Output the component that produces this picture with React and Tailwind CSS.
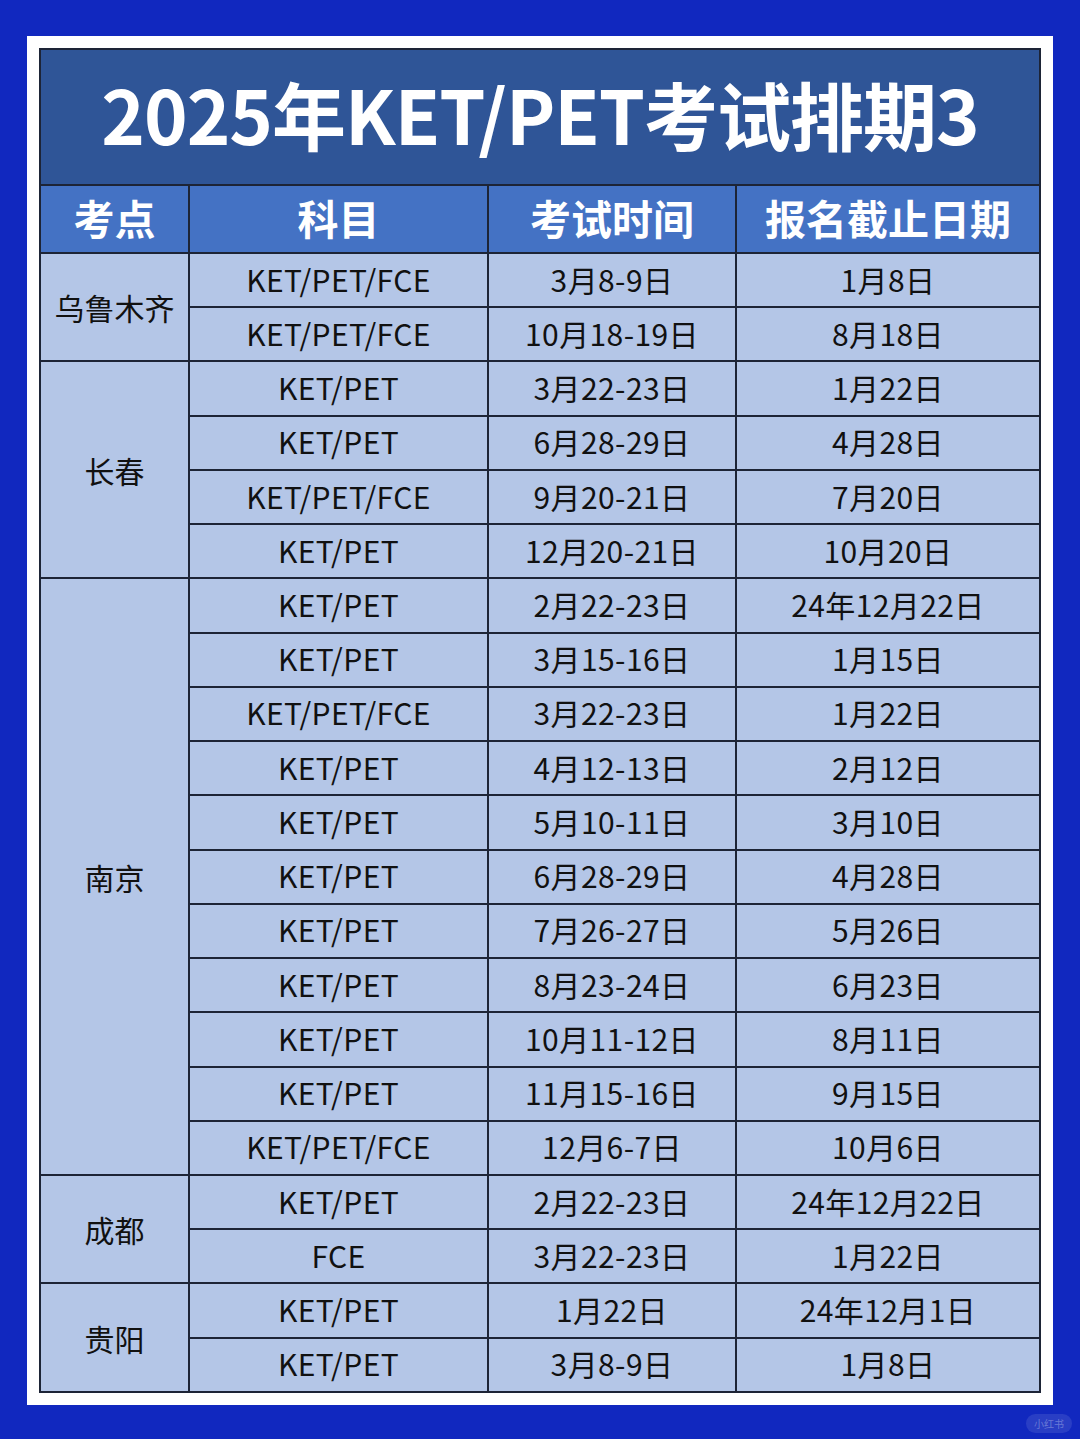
const groups = [
  {
    city: '乌鲁木齐',
    rows: [
      ['KET/PET/FCE', '3月8-9日', '1月8日'],
      ['KET/PET/FCE', '10月18-19日', '8月18日'],
    ],
  },
  {
    city: '长春',
    rows: [
      ['KET/PET', '3月22-23日', '1月22日'],
      ['KET/PET', '6月28-29日', '4月28日'],
      ['KET/PET/FCE', '9月20-21日', '7月20日'],
      ['KET/PET', '12月20-21日', '10月20日'],
    ],
  },
  {
    city: '南京',
    rows: [
      ['KET/PET', '2月22-23日', '24年12月22日'],
      ['KET/PET', '3月15-16日', '1月15日'],
      ['KET/PET/FCE', '3月22-23日', '1月22日'],
      ['KET/PET', '4月12-13日', '2月12日'],
      ['KET/PET', '5月10-11日', '3月10日'],
      ['KET/PET', '6月28-29日', '4月28日'],
      ['KET/PET', '7月26-27日', '5月26日'],
      ['KET/PET', '8月23-24日', '6月23日'],
      ['KET/PET', '10月11-12日', '8月11日'],
      ['KET/PET', '11月15-16日', '9月15日'],
      ['KET/PET/FCE', '12月6-7日', '10月6日'],
    ],
  },
  {
    city: '成都',
    rows: [
      ['KET/PET', '2月22-23日', '24年12月22日'],
      ['FCE', '3月22-23日', '1月22日'],
    ],
  },
  {
    city: '贵阳',
    rows: [
      ['KET/PET', '1月22日', '24年12月1日'],
      ['KET/PET', '3月8-9日', '1月8日'],
    ],
  },
]

const headers = ['考点', '科目', '考试时间', '报名截止日期']

export default function App() {
  return (
    <div
      className="relative w-[1080px] h-[1439px] bg-[#1128bf] pt-[36px] px-[27px]"
      style={{ fontFamily: '"Noto Sans CJK SC", "Noto Sans", sans-serif' }}
    >
      <div className="bg-white p-[12px]">
        <table className="w-full border-collapse table-fixed border-2 border-[#1d2436] text-center">
          <colgroup>
            <col className="w-[149px]" />
            <col className="w-[299px]" />
            <col className="w-[248px]" />
            <col />
          </colgroup>
          <thead>
            <tr className="h-[136px] bg-[#2f5597]">
              <th
                colSpan={4}
                className="border-2 border-[#1d2436] pb-[8px] text-white text-[74px] font-bold leading-none tracking-[-1px]"
              >
                2025年KET/PET考试排期3
              </th>
            </tr>
            <tr className="h-[68px] bg-[#4472c4]">
              {headers.map((h) => (
                <th
                  key={h}
                  className="border-2 border-[#1d2436] pb-[4px] text-white text-[41px] font-bold leading-none"
                >
                  {h}
                </th>
              ))}
            </tr>
          </thead>
          <tbody className="bg-[#b4c6e7] text-[#111111] text-[30px] leading-none tracking-[0.4px]">
            {groups.map((g) =>
              g.rows.map((r, i) => (
                <tr key={g.city + i} className="h-[54.24px]">
                  {i === 0 && (
                    <td rowSpan={g.rows.length} className="border-2 border-[#1d2436] tracking-normal">
                      {g.city}
                    </td>
                  )}
                  {r.map((c, j) => (
                    <td key={j} className="border-2 border-[#1d2436] pb-[3px] whitespace-nowrap">
                      {c}
                    </td>
                  ))}
                </tr>
              ))
            )}
          </tbody>
        </table>
      </div>
      <div className="absolute right-[8px] bottom-[6px] rounded-full bg-white/10 px-2 py-[2px] text-[10px] text-white/30">
        小红书
      </div>
    </div>
  )
}
